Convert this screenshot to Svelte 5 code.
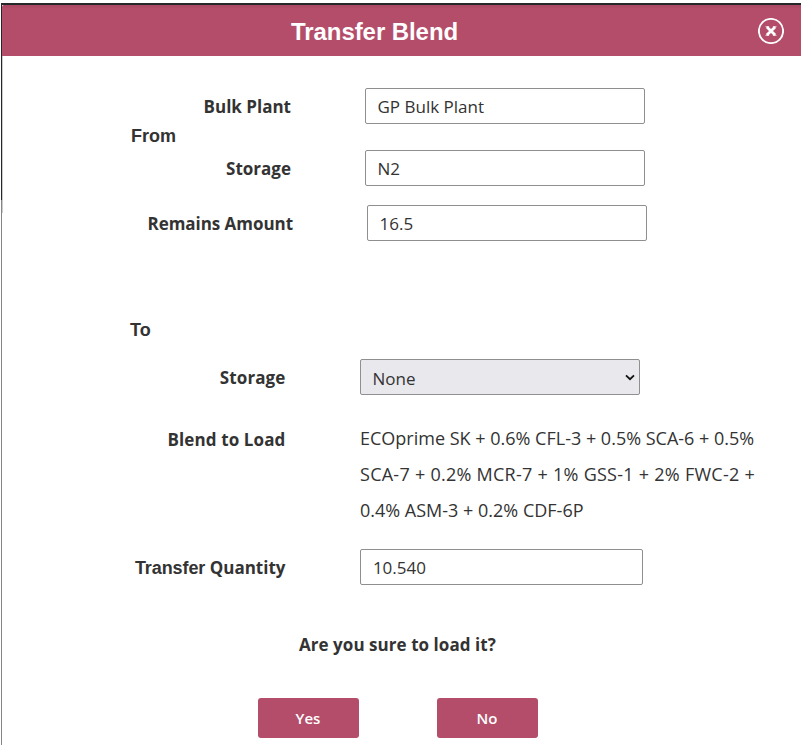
<script>
  let bulkPlant = $state('GP Bulk Plant');
  let fromStorage = $state('N2');
  let remains = $state('16.5');
  let toStorage = $state('None');
  let quantity = $state('10.540');
  const blend = [
    'ECOprime SK + 0.6% CFL-3 + 0.5% SCA-6 + 0.5%',
    'SCA-7 + 0.2% MCR-7 + 1% GSS-1 + 2% FWC-2 +',
    '0.4% ASM-3 + 0.2% CDF-6P'
  ];
</script>

<div class="page">
  <div class="topline"></div>
  <div class="shell">
    <div class="edge"></div>
    <div class="dialog">
      <header>
        <h1>Transfer Blend</h1>
        <button class="close" aria-label="Close">
          <svg width="26" height="26" viewBox="0 0 26 26" fill="none" stroke="#fff">
            <circle cx="13" cy="13" r="12.1" stroke-width="1.9" />
            <path d="M8.9 9 17.1 17M17.1 9 8.9 17" stroke-width="2.8" />
            <path d="M7.5 8.7h3.6M14.9 8.7h3.6M7.5 17.3h3.6M14.9 17.3h3.6" stroke-width="0.8" />
          </svg>
        </button>
      </header>
      <div class="body">
        <div class="scrolledge"></div>
        <form onsubmit={(e) => e.preventDefault()}>
          <div class="from">
            <strong class="side">From</strong>
            <div class="pair">
              <div class="row"><label for="bp">Bulk Plant</label><input id="bp" bind:value={bulkPlant} /></div>
              <div class="row"><label for="fs">Storage</label><input id="fs" bind:value={fromStorage} /></div>
            </div>
          </div>
          <div class="row remains"><label for="ra">Remains Amount</label><input id="ra" bind:value={remains} /></div>
          <strong class="side to">To</strong>
          <div class="row target">
            <label for="ts">Storage</label>
            <div class="select">
              <select id="ts" bind:value={toStorage}><option>None</option></select>
              <svg width="10" height="7" viewBox="0 0 10 7" fill="none" stroke="#111" stroke-width="1.8"><path d="M1 1.3 5 5.2 9 1.3" /></svg>
            </div>
          </div>
          <div class="row blendrow">
            <span class="label">Blend to Load</span>
            <div class="mix">{#each blend as line}<div>{line}</div>{/each}</div>
          </div>
          <div class="row qty"><label for="tq"><span class="sans">Transfer</span> Quantity</label><input id="tq" bind:value={quantity} /></div>
          <div class="confirm"><p>Are you sure to load it?</p></div>
          <div class="actions"><button type="button">Yes</button><button type="button">No</button></div>
        </form>
      </div>
    </div>
  </div>
</div>

<style>
  * { box-sizing: border-box; }
  .page { width: 801px; height: 745px; overflow: hidden; background: #fff; padding: 3px 0 0 1px; color: #333; font-family: 'Open Sans', 'Noto Sans', sans-serif; font-size: 17px; }
  .topline { height: 2px; background: #26272a; }
  .shell { display: flex; height: 740px; }
  .edge { width: 1px; background: linear-gradient(#26272a 195px, #858585 195px); }
  .dialog { width: 799px; }
  header { height: 51px; background: linear-gradient(#a94762, #b44d6a 4px); display: flex; align-items: center; justify-content: space-between; padding: 0 17px 0 289px; border-top-left-radius: 2px; }
  h1 { margin: 2px 0 0; color: #fff; font: bold 24px 'Liberation Sans', Arial, sans-serif; letter-spacing: -0.07px; white-space: nowrap; }
  .close { padding: 0; border: 0; background: none; width: 26px; height: 26px; }
  .close svg { display: block; }
  .body { display: flex; height: 689px; }
  .scrolledge { width: 1px; height: 157px; background: #ccc; }
  form { width: 798px; padding-top: 32px; }
  .from { display: flex; align-items: center; height: 98px; padding-left: 128px; }
  .side { width: 60px; font: bold 18px/24px 'Liberation Sans', Arial, sans-serif; }
  .from .side { margin-top: -3px; }
  .pair { display: flex; flex-direction: column; gap: 26px; }
  .row { display: flex; height: 36px; }
  .row label, .row .label { width: 100px; margin-right: 74px; line-height: 38px; font-weight: 700; text-align: right; white-space: nowrap; }
  .row.remains label { width: 290px; letter-spacing: -0.05px; }
  .row.target label, .row.blendrow .label, .row.qty label { width: 283px; padding-right: 0.5px; letter-spacing: 0.12px; }
  .row.target label, .row.blendrow .label { line-height: 37px; }
  .row.qty label { letter-spacing: 0; }
  input, select { width: 280px; height: 36px; margin: 0; padding: 0 0 0 11.5px; border: 1px solid #8f8f8f; border-radius: 2px; background: #fff; color: #333; font: inherit; outline: 0; }
  .remains { margin-top: 19px; }
  .to { display: block; margin: 77px 0 0 127px; }
  .target { margin-top: 17px; }
  .select { position: relative; }
  select { display: block; appearance: none; padding-top: 2px; background: #e9e8ed; }
  .select svg { position: absolute; right: 5px; top: 15px; }
  .blendrow { margin-top: 26px; height: 108px; }
  .mix { margin-top: -1px; font-size: 18px; line-height: 36px; white-space: nowrap; }
  .mix div:nth-child(2) { letter-spacing: 0.26px; }
  .qty { margin-top: 20px; }
  .qty input { width: 283px; position: relative; left: 0.4px; }
  .sans { font-family: 'Liberation Sans', Arial, sans-serif; font-size: 18px; letter-spacing: -0.08px; }
  .confirm { margin-top: 48px; height: 24px; padding-left: 296px; }
  p { margin: 0; line-height: 24px; font-weight: 700; letter-spacing: 0.05px; white-space: nowrap; }
  .actions { display: flex; gap: 78px; margin-top: 41px; padding-left: 254.5px; }
  .actions button { width: 101px; height: 40px; padding: 0; border: 0; border-radius: 3px; background: #b44d6a; color: #fff; font: 600 15px 'Open Sans', sans-serif; }
</style>
